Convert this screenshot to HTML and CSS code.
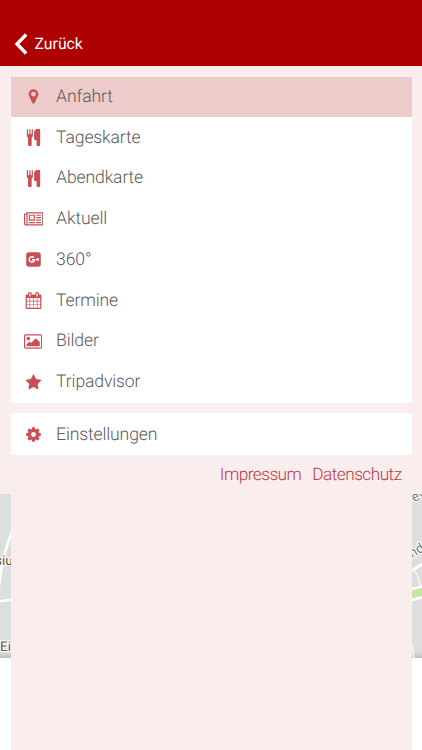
FILE: index.html
```html
<!DOCTYPE html>
<html lang="de">
<head>
<meta charset="utf-8">
<meta name="viewport" content="width=device-width, initial-scale=1">
<title>Menü</title>
<link rel="stylesheet" href="styles.css">
</head>
<body>
<header class="topbar">
  <svg class="back-icon" viewBox="0 0 14 22"><path d="M12.200 1.500L3 11l9.200 9.500"/></svg>
  <span class="back-label">Zurück</span>
</header>
<main class="panel">
  <nav class="menu">
    <a class="item active"><svg class="icon" viewBox="0 0 1792 1792"><path d="M1152 640q0-106-75-181t-181-75-181 75-75 181 75 181 181 75 181-75 75-181zm256 0q0 109-33 179l-364 774q-16 33-47.500 52t-67.500 19-67.500-19-46.500-52l-365-774q-33-70-33-179 0-212 150-362t362-150 362 150 150 362z"/></svg><span>Anfahrt</span></a>
    <a class="item"><svg class="icon" viewBox="0 0 1792 1792"><path d="M832 64v640q0 61-35.500 111t-92.500 70v779q0 52-38 90t-90 38h-128q-52 0-90-38t-38-90v-779q-57-20-92.500-70t-35.500-111v-640q0-26 19-45t45-19 45 19 19 45v416q0 26 19 45t45 19 45-19 19-45v-416q0-26 19-45t45-19 45 19 19 45v416q0 26 19 45t45 19 45-19 19-45v-416q0-26 19-45t45-19 45 19 19 45zm768 0v1600q0 52-38 90t-90 38h-128q-52 0-90-38t-38-90v-512h-224q-13 0-22.500-9.500t-9.500-22.500v-800q0-132 94-226t226-94h256q26 0 45 19t19 45z"/></svg><span>Tageskarte</span></a>
    <a class="item"><svg class="icon" viewBox="0 0 1792 1792"><path d="M832 64v640q0 61-35.500 111t-92.500 70v779q0 52-38 90t-90 38h-128q-52 0-90-38t-38-90v-779q-57-20-92.500-70t-35.500-111v-640q0-26 19-45t45-19 45 19 19 45v416q0 26 19 45t45 19 45-19 19-45v-416q0-26 19-45t45-19 45 19 19 45v416q0 26 19 45t45 19 45-19 19-45v-416q0-26 19-45t45-19 45 19 19 45zm768 0v1600q0 52-38 90t-90 38h-128q-52 0-90-38t-38-90v-512h-224q-13 0-22.500-9.500t-9.500-22.500v-800q0-132 94-226t226-94h256q26 0 45 19t19 45z"/></svg><span>Abendkarte</span></a>
    <a class="item"><svg class="icon" viewBox="0 0 2048 1792"><path d="M1024 512h-384v384h384v-384zm128 640v128h-640v-128h640zm0-768v640h-640v-640h640zm640 768v128h-512v-128h512zm0-256v128h-512v-128h512zm0-256v128h-512v-128h512zm0-256v128h-512v-128h512zm-1536 960v-960h-128v960q0 26 19 45t45 19 45-19 19-45zm1664 0v-1088h-1536v1088q0 33-11 64h1483q26 0 45-19t19-45zm128-1216v1216q0 80-56 136t-136 56h-1664q-80 0-136-56t-56-136v-1088h256v-128h1792z"/></svg><span>Aktuell</span></a>
    <a class="item"><svg class="icon" viewBox="0 0 1792 1792"><rect x="128" y="128" width="1536" height="1536" rx="288"/><path class="cutout" d="M940 690A285 285 0 1 0 1015 915H735M1325 750v300M1175 900h300"/></svg><span>360°</span></a>
    <a class="item"><svg class="icon" viewBox="0 0 1792 1792"><path d="M192 1664h288v-288h-288v288zm352 0h320v-288h-320v288zm-352-352h288v-320h-288v320zm352 0h320v-320h-320v320zm-352-384h288v-288h-288v288zm736 736h320v-288h-320v288zm-384-736h320v-288h-320v288zm768 736h288v-288h-288v288zm-384-352h320v-320h-320v320zm-352-864v-288q0-13-9.500-22.500t-22.500-9.500h-64q-13 0-22.500 9.500t-9.500 22.500v288q0 13 9.500 22.500t22.500 9.500h64q13 0 22.500-9.500t9.500-22.500zm736 864h288v-320h-288v320zm-384-384h320v-288h-320v288zm384 0h288v-288h-288v288zm32-480v-288q0-13-9.500-22.500t-22.500-9.500h-64q-13 0-22.500 9.500t-9.500 22.500v288q0 13 9.500 22.500t22.500 9.500h64q13 0 22.500-9.500t9.500-22.500zm384-64v1280q0 52-38 90t-90 38h-1408q-52 0-90-38t-38-90v-1280q0-52 38-90t90-38h128v-96q0-66 47-113t113-47h64q66 0 113 47t47 113v96h384v-96q0-66 47-113t113-47h64q66 0 113 47t47 113v96h128q52 0 90 38t38 90z"/></svg><span>Termine</span></a>
    <a class="item"><svg class="icon" viewBox="0 0 1920 1792"><path d="M640 576q0 80-56 136t-136 56-136-56-56-136 56-136 136-56 136 56 56 136zm1024 384v448h-1408v-192l320-320 160 160 512-512zm96-704h-1600q-13 0-22.500 9.500t-9.500 22.500v1216q0 13 9.500 22.500t22.500 9.500h1600q13 0 22.500-9.500t9.500-22.500v-1216q0-13-9.500-22.500t-22.500-9.500zm160 32v1216q0 66-47 113t-113 47h-1600q-66 0-113-47t-47-113v-1216q0-66 47-113t113-47h1600q66 0 113 47t47 113z"/></svg><span>Bilder</span></a>
    <a class="item"><svg class="icon" viewBox="0 0 1792 1792"><path d="M1728 647q0 22-26 48l-363 354 86 500q1 7 1 20 0 21-10.500 35.500t-30.500 14.500q-19 0-40-12l-449-236-449 236q-22 12-40 12-21 0-31.500-14.500t-10.500-35.500q0-6 2-20l86-500-364-354q-25-27-25-48 0-37 56-46l502-73 225-455q19-41 49-41t49 41l225 455 502 73q56 9 56 46z"/></svg><span>Tripadvisor</span></a>
  </nav>
  <nav class="menu settings">
    <a class="item"><svg class="icon" viewBox="0 0 1792 1792"><path d="M1152 896q0-106-75-181t-181-75-181 75-75 181 75 181 181 75 181-75 75-181zm512-109v222q0 12-8 23t-20 13l-185 28q-19 54-39 91 35 50 107 138 10 12 10 25t-9 23q-27 37-99 108t-94 71q-12 0-26-9l-138-108q-44 23-91 38-16 136-29 186-7 28-36 28h-222q-14 0-24.500-8.500t-11.500-21.500l-28-184q-49-16-90-37l-141 107q-10 9-25 9-14 0-25-11-126-114-165-168-7-10-7-23 0-12 8-23 15-21 51-66.500t54-70.500q-27-50-41-99l-183-27q-13-2-21-12.500t-8-23.500v-222q0-12 8-23t19-13l186-28q14-46 39-92-40-57-107-138-10-12-10-24 0-10 9-23 26-36 98.500-107.500t94.500-71.500q13 0 26 10l138 107q44-23 91-38 16-136 29-186 7-28 36-28h222q14 0 24.500 8.500t11.500 21.500l28 184q49 16 90 37l142-107q9-9 24-9 13 0 25 10 129 119 165 170 7 8 7 22 0 12-8 23-15 21-51 66.500t-54 70.500q26 50 41 98l183 28q13 2 21 12.500t8 23.500z"/></svg><span>Einstellungen</span></a>
  </nav>
  <div class="legal"><a>Impressum</a><a>Datenschutz</a></div>
</main>
<section class="backdrop">
  <svg class="map" viewBox="0 0 10.500 164">
    <path class="road" d="M12 37L4 61Q2 70-1 92M-1 107.500L12 105.500"/>
    <text class="place" x="-5" y="70.500">siu</text>
    <text class="place" x="0" y="157">Ei</text>
  </svg>
  <div class="overlay"></div>
  <svg class="map" viewBox="0 0 10.500 164">
    <path class="corner" d="M0 0h10.500v2L0 8z"/>
    <path class="road" d="M-2 78L12 69"/>
    <path class="road thin" d="M3 77Q8 85 10 102M0 150l2 14"/>
    <path class="road wide" d="M-2 101L13 97"/>
    <path class="park" d="M-2 101L13 97"/>
    <text class="street" transform="translate(-1 10) rotate(-28)">‑ev</text>
    <text class="street" transform="translate(0 64) rotate(-30)">nd</text>
  </svg>
</section>
</body>
</html>
```
FILE: styles.css
```css
* { box-sizing: border-box; }
body {
  margin: 0;
  height: 750px;
  overflow: hidden;
  display: flex;
  flex-direction: column;
  background: #fff;
  font-family: Roboto, "Liberation Sans", sans-serif;
  text-rendering: geometricPrecision;
}
.topbar {
  height: 66.400px;
  flex: none;
  display: flex;
  align-items: center;
  gap: 6.500px;
  padding: 22px 14px 0;
  background: #ad0000;
  color: #fff;
}
.back-icon { width: 14px; height: 22px; }
.back-icon path { fill: none; stroke: #fff; stroke-width: 3.400; }
.back-label { font-size: 15.800px; line-height: 22px; }
.panel {
  height: 427.600px;
  flex: none;
  padding: 10.300px 10.500px 0;
  background: #f9eded;
}
.menu { background: #fff; }
.item {
  height: 40.750px;
  display: grid;
  grid-template-columns: 45.600px 1fr;
  align-items: center;
  color: #5c5c5c;
  font-size: 17.600px;
  font-weight: 300;
  line-height: 24px;
  letter-spacing: -.15px;
}
.item span { padding-bottom: .6px; }
.active { background: #eecbcb; }
.icon { height: 17px; justify-self: center; margin-bottom: .6px; fill: #c85054; }
.cutout { fill: none; stroke: #fff; stroke-width: 150; }
.settings { margin-top: 10px; padding-top: 2px; height: 42.500px; }
.legal {
  display: flex;
  justify-content: flex-end;
  gap: 11px;
  padding: 8px 10px 0;
  color: #b93b3f;
  font-size: 17.200px;
  font-weight: 300;
  line-height: 24px;
  letter-spacing: -.5px;
}
.backdrop {
  flex: 1;
  display: grid;
  grid-template-columns: 10.500px 1fr 10.500px;
}
.overlay { background: #f9eded; }
.map {
  display: block;
  width: 10.500px;
  height: 164px;
  overflow: hidden;
  background: linear-gradient(#dedede 158px, #bdbdbd);
}
.road { fill: none; stroke: #fff; stroke-width: 2.500; }
.thin { stroke: #f5f5f5; stroke-width: 1.500; }
.wide { stroke-width: 13; }
.park { fill: none; stroke: #c6e5a1; stroke-width: 8; }
.corner { fill: #f5f2f2; }
.place, .street {
  font: 13.500px Roboto, sans-serif;
  fill: #6b5144;
  stroke: #fff;
  stroke-width: 2px;
  paint-order: stroke;
}
.street { fill: #777; }
```
